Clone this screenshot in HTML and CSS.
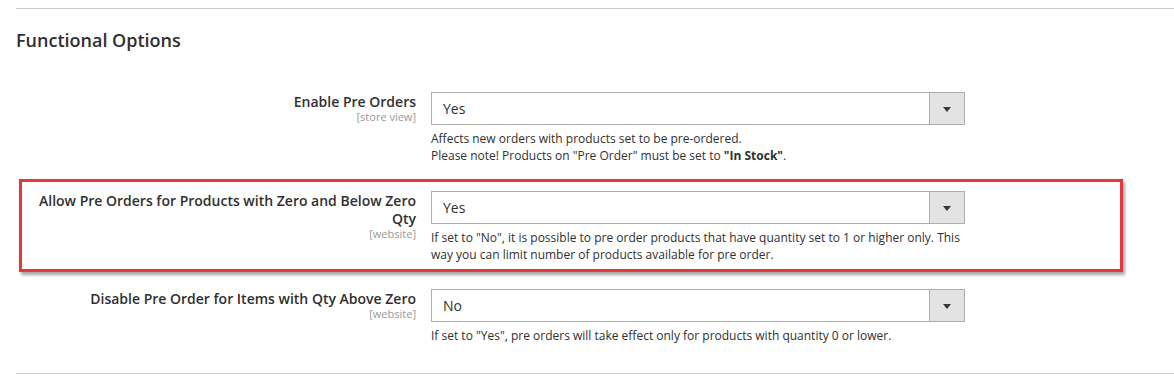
FILE: index.html
```html
<!DOCTYPE html>
<html lang="en">
<head>
    <meta charset="UTF-8">
    <meta name="viewport" content="width=device-width, initial-scale=1.0">
    <title>Functional Options</title>
    <link rel="stylesheet" href="styles.css">
</head>
<body>
    <div id="config-page">
        <div class="section">
            <h2 class="section-title">Functional Options</h2>

            <div class="field">
                <div class="field-label">
                    <span>Enable Pre Orders</span>
                    <span class="scope">[store view]</span>
                </div>
                <div class="field-control">
                    <div class="select">
                        <span class="select-value">Yes</span>
                        <span class="select-arrow"></span>
                    </div>
                    <p class="note">Affects new orders with products set to be pre-ordered.<br>Please note! Products on "Pre Order" must be set to <strong>"In Stock"</strong>.</p>
                </div>
            </div>

            <div class="field highlighted">
                <div class="field-label">
                    <span>Allow Pre Orders for Products with Zero and Below Zero Qty</span>
                    <span class="scope">[website]</span>
                </div>
                <div class="field-control">
                    <div class="select">
                        <span class="select-value">Yes</span>
                        <span class="select-arrow"></span>
                    </div>
                    <p class="note">If set to "No", it is possible to pre order products that have quantity set to 1 or higher only. This way you can limit number of products available for pre order.</p>
                </div>
            </div>

            <div class="field">
                <div class="field-label">
                    <span>Disable Pre Order for Items with Qty Above Zero</span>
                    <span class="scope">[website]</span>
                </div>
                <div class="field-control">
                    <div class="select">
                        <span class="select-value">No</span>
                        <span class="select-arrow"></span>
                    </div>
                    <p class="note">If set to "Yes", pre orders will take effect only for products with quantity 0 or lower.</p>
                </div>
            </div>
        </div>
    </div>
</body>
</html>
```

FILE: styles.css
```css
body {
    font-family: 'Open Sans', 'Liberation Sans', sans-serif;
    margin: 0;
    padding: 0;
    background-color: #fff;
    color: #303030;
}
#config-page {
    padding: 8px 0 0 16px;
}
.section {
    border-top: 1px solid #cccccc;
    border-bottom: 1px solid #cccccc;
    padding-bottom: 29px;
}
.section-title {
    margin: 21px 0 42px;
    font-size: 18px;
    line-height: 20px;
    font-weight: 600;
    color: #303030;
}
.field {
    display: flex;
    margin-bottom: 26px;
    position: relative;
}
.field:first-of-type {
    margin-bottom: 27px;
}
.field:last-child {
    margin-bottom: 0;
}
.field-label {
    width: 390px;
    padding: 1px 0 0 10px;
    text-align: right;
    font-size: 14px;
    line-height: 18px;
    font-weight: 600;
}
.field-label span {
    display: block;
}
.field-label .scope {
    font-size: 11px;
    line-height: 11px;
    font-weight: 400;
    color: #999;
}
.field-control {
    width: 534px;
    margin-left: 15px;
}
.select {
    display: flex;
    height: 33px;
    box-sizing: border-box;
    border: 1px solid #adadad;
    background-color: #fff;
}
.select-value {
    flex: 1;
    padding-left: 11px;
    font-size: 14px;
    line-height: 31px;
}
.select-arrow {
    width: 34px;
    border-left: 1px solid #adadad;
    background-color: #e3e3e3;
    position: relative;
}
.select-arrow::after {
    content: '';
    position: absolute;
    left: 13px;
    top: 14px;
    border-left: 4px solid transparent;
    border-right: 4px solid transparent;
    border-top: 5px solid #41362f;
}
.note {
    margin: 5px 0 0;
    font-size: 12px;
    line-height: 17px;
}
.note strong {
    font-weight: 700;
}
.highlighted::after {
    content: '';
    position: absolute;
    left: 3px;
    top: -12px;
    width: 1104px;
    height: 93px;
    box-sizing: border-box;
    border: 3px solid #e5383b;
    box-shadow: 2px 3px 3px rgba(0, 0, 0, 0.35);
    pointer-events: none;
}
```
